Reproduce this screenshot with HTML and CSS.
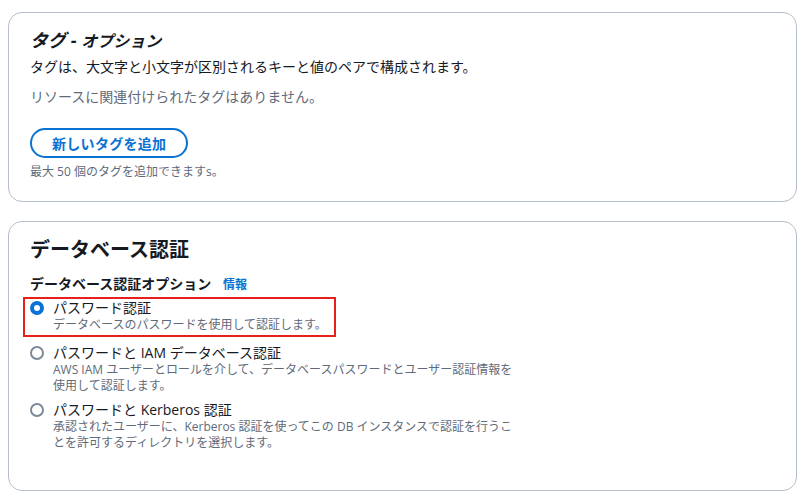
FILE: index.html
```html
<!DOCTYPE html>
<html lang="ja">
<head>
    <meta charset="UTF-8">
    <meta name="viewport" content="width=device-width, initial-scale=1.0">
    <title>タグとデータベース認証</title>
    <link rel="stylesheet" href="styles.css">
</head>
<body>
    <section class="card card-tags">
        <h2 class="card-title">タグ - <i class="optional">オプション</i></h2>
        <p class="card-desc">タグは、大文字と小文字が区別されるキーと値のペアで構成されます。</p>
        <p class="empty">リソースに関連付けられたタグはありません。</p>
        <button class="btn-add" type="button">新しいタグを追加</button>
        <p class="hint">最大 50 個のタグを追加できますs。</p>
    </section>

    <section class="card card-auth">
        <h2 class="card-title big">データベース認証</h2>
        <div class="field-label">データベース認証オプション <a class="info" href="#">情報</a></div>

        <div class="options">
            <label class="option highlight">
                <span class="radio checked"></span>
                <span class="option-text">
                    <span class="option-name">パスワード認証</span>
                    <span class="option-desc">データベースのパスワードを使用して認証します。</span>
                </span>
            </label>
            <label class="option">
                <span class="radio"></span>
                <span class="option-text">
                    <span class="option-name">パスワードと IAM データベース認証</span>
                    <span class="option-desc">AWS IAM ユーザーとロールを介して、データベースパスワードとユーザー認証情報を使用して認証します。</span>
                </span>
            </label>
            <label class="option">
                <span class="radio"></span>
                <span class="option-text">
                    <span class="option-name">パスワードと Kerberos 認証</span>
                    <span class="option-desc">承認されたユーザーに、Kerberos 認証を使ってこの DB インスタンスで認証を行うことを許可するディレクトリを選択します。</span>
                </span>
            </label>
        </div>
    </section>
</body>
</html>
```

FILE: styles.css
```css
:root {
    --text-color: #16191f;
    --muted-color: #5f6b7a;
    --link-color: #0972d3;
    --border-color: #b6bec9;
    --mark-color: #e8201c;
}
body {
    font-family: 'Open Sans', 'Noto Sans CJK JP', sans-serif;
    color: var(--text-color);
    background-color: white;
    margin: 0;
    padding: 12px 12px 0 8px;
}
.card {
    border: 1px solid var(--border-color);
    border-radius: 14px;
    padding: 15px 20px 21px 21px;
}
.card-auth {
    margin-top: 19px;
    padding-top: 14px;
    padding-bottom: 39px;
}
.card-title {
    margin: 0;
    font-size: 18px;
    line-height: 24px;
    font-weight: bold;
    font-style: italic;
}
.card-title .optional {
    font-size: 16px;
}
.card-title.big {
    font-size: 20px;
    line-height: 28px;
    font-style: normal;
}
.card-desc {
    margin: 4px 0 0;
    font-size: 14px;
    line-height: 20px;
}
.empty {
    margin: 10px 0 0;
    font-size: 14px;
    line-height: 20px;
    color: var(--muted-color);
}
.btn-add {
    display: block;
    margin-top: 21px;
    height: 30px;
    padding: 0 20px;
    border: 2px solid var(--link-color);
    border-radius: 16px;
    background-color: white;
    color: var(--link-color);
    font-family: inherit;
    font-size: 14px;
    font-weight: bold;
    letter-spacing: 0.3px;
}
.hint {
    margin: 6px 0 0;
    font-size: 12px;
    line-height: 16px;
    color: var(--muted-color);
}
.field-label {
    margin-top: 10px;
    font-size: 14px;
    line-height: 20px;
    font-weight: bold;
}
.info {
    margin-left: 8px;
    font-size: 12px;
    color: var(--link-color);
    text-decoration: none;
}
.options {
    display: flex;
    flex-direction: column;
    align-items: flex-start;
    gap: 7px;
    margin-top: 4px;
}
.option {
    display: flex;
    gap: 9px;
    max-width: 492px;
}
.option.highlight {
    border: 2px solid var(--mark-color);
    margin: -2px 0 0 -7px;
    padding: 0 7px 2px 5px;
}
.radio {
    flex: none;
    width: 14px;
    height: 14px;
    margin-top: 2px;
    border: 2px solid #7d8998;
    border-radius: 50%;
    box-sizing: border-box;
}
.radio.checked {
    border: 4px solid var(--link-color);
}
.option-text {
    display: flex;
    flex-direction: column;
}
.option-name {
    font-size: 14px;
    line-height: 18px;
}
.option-desc {
    font-size: 12px;
    line-height: 16px;
    color: var(--muted-color);
}
```
